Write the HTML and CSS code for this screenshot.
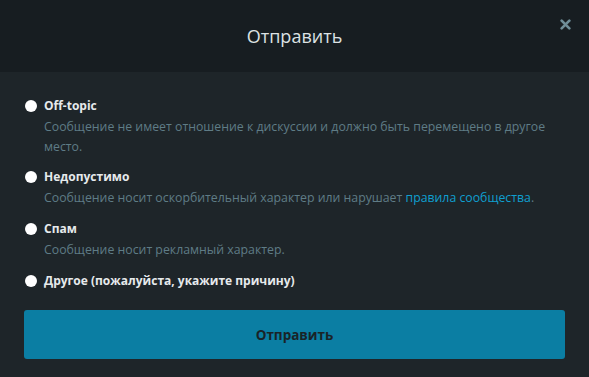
FILE: index.html
```html
<!DOCTYPE html>
<html lang="ru">
<head>
    <meta charset="UTF-8">
    <title>Отправить</title>
    <link rel="stylesheet" href="styles.css">
</head>
<body>
<div class="modal">
    <div class="modal-header">
        <h2>Отправить</h2>
        <button class="close" type="button" aria-label="Закрыть">
            <svg width="11" height="11" viewBox="0 0 10 10"><path d="M1.5 1.5 L8.5 8.5 M8.5 1.5 L1.5 8.5" stroke="currentColor" stroke-width="2.4" stroke-linecap="round"/></svg>
        </button>
    </div>
    <div class="modal-body">
        <label class="option">
            <input type="radio" name="reason" value="offtopic">
            <span class="option-text">
                <span class="option-title">Off-topic</span>
                <span class="option-desc">Сообщение не имеет отношение к дискуссии и должно быть перемещено в другое место.</span>
            </span>
        </label>
        <label class="option">
            <input type="radio" name="reason" value="inappropriate">
            <span class="option-text">
                <span class="option-title">Недопустимо</span>
                <span class="option-desc">Сообщение носит оскорбительный характер или нарушает <a href="#">правила сообщества</a>.</span>
            </span>
        </label>
        <label class="option">
            <input type="radio" name="reason" value="spam">
            <span class="option-text">
                <span class="option-title">Спам</span>
                <span class="option-desc">Сообщение носит рекламный характер.</span>
            </span>
        </label>
        <label class="option">
            <input type="radio" name="reason" value="other">
            <span class="option-text">
                <span class="option-title">Другое (пожалуйста, укажите причину)</span>
            </span>
        </label>
        <button class="submit" type="button">Отправить</button>
    </div>
</div>
</body>
</html>
```

FILE: styles.css
```css
body {
    font-family: 'Open Sans', 'Noto Sans', sans-serif;
    margin: 0;
    padding: 0;
    background-color: #1e2529;
    color: #e4e8ea;
}
.modal {
    width: 589px;
    height: 377px;
    background: #1e2529;
}
.modal-header {
    height: 72px;
    background: #171d21;
    display: flex;
    align-items: center;
    justify-content: center;
    position: relative;
}
.modal-header h2 {
    margin: 0;
    font-size: 18px;
    font-weight: 400;
    color: #dde2e4;
}
.close {
    position: absolute;
    top: 18px;
    right: 18px;
    padding: 0;
    border: none;
    background: none;
    color: #6f8e98;
    width: 12px;
    height: 12px;
    display: flex;
    align-items: center;
    justify-content: center;
}
.modal-body {
    padding: 24px 24px 0 24px;
    display: flex;
    flex-direction: column;
}
.option {
    display: flex;
    align-items: flex-start;
    gap: 7px;
    margin-bottom: 11px;
}
.option:first-child {
    margin-bottom: 10px;
}
.option input {
    margin: 4px 0 0 1px;
    width: 12px;
    height: 12px;
    appearance: none;
    border-radius: 50%;
    background: #ffffff;
    flex-shrink: 0;
}
.option-text {
    display: flex;
    flex-direction: column;
}
.option-title {
    font-size: 12px;
    font-weight: 700;
    line-height: 20px;
    color: #e6eaec;
}
.option-desc {
    font-size: 12.3px;
    line-height: 20px;
    color: #5f7c86;
    margin-top: 1px;
}
.option-desc a {
    color: #0f9fd0;
    text-decoration: none;
}
.submit {
    margin-top: 8px;
    height: 49px;
    border: none;
    border-radius: 3px;
    background: #0b7ea3;
    color: #1a2327;
    font-family: 'Open Sans', 'Noto Sans', sans-serif;
    font-size: 13.5px;
    font-weight: 700;
}
```
